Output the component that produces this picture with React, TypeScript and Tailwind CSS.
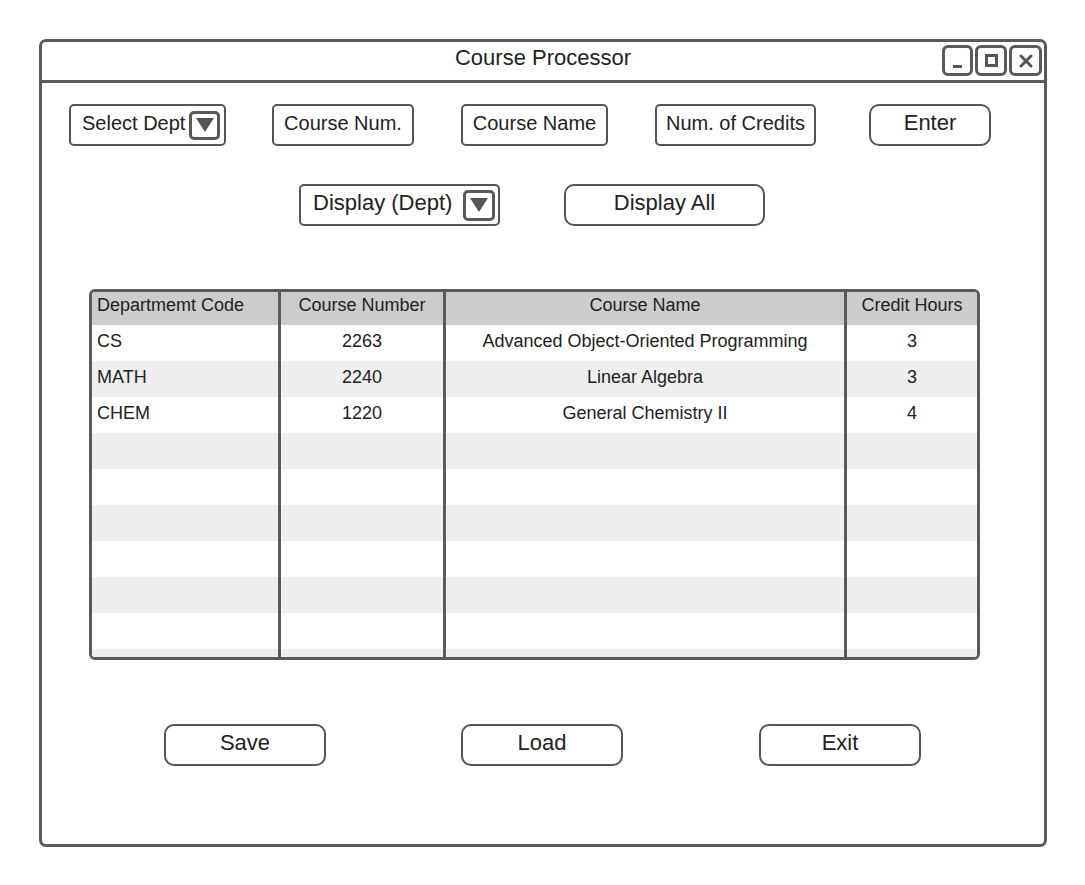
import React from "react";

const Arrow = ({ cls }: { cls: string }) => (
  <div className={`flex items-center justify-center rounded-[5px] border-[3px] border-[#595959] bg-white ${cls}`}>
    <svg width="20" height="16" viewBox="0 0 20 16">
      <polygon points="1,1 19,1 10,15" fill="#555555" />
    </svg>
  </div>
);

const Box = ({ label, cls }: { label: string; cls: string }) => (
  <div
    className={`flex h-[42px] items-center justify-center rounded-[5px] border-[2px] border-[#555555] bg-white pb-[5px] text-[20px] text-[#222] ${cls}`}
  >
    {label}
  </div>
);

const Btn = ({ label, cls }: { label: string; cls: string }) => (
  <div
    className={`flex h-[42px] items-center justify-center rounded-[10px] border-[2px] border-[#555555] bg-white pb-[6px] text-[22px] text-[#222] ${cls}`}
  >
    {label}
  </div>
);

const rows = [
  ["CS", "2263", "Advanced Object-Oriented Programming", "3"],
  ["MATH", "2240", "Linear Algebra", "3"],
  ["CHEM", "1220", "General Chemistry II", "4"],
  ["", "", "", ""],
  ["", "", "", ""],
  ["", "", "", ""],
  ["", "", "", ""],
  ["", "", "", ""],
  ["", "", "", ""],
  ["", "", "", ""],
];

export default function App() {
  return (
    <div
      className="h-[885px] w-[1085px] bg-white pl-[39px] pt-[39px]"
      style={{ fontFamily: '"Liberation Sans", Arial, sans-serif' }}
    >
      <div className="flex h-[808px] w-[1008px] flex-col rounded-[7px] border-[3px] border-[#5a5a5a]">
        {/* title bar */}
        <div className="relative flex h-[41px] items-center justify-center border-b-[3px] border-[#5a5a5a]">
          <span className="pb-[8px] text-[22px] text-[#222]">Course Processor</span>
          <div className="absolute right-[2px] top-[3px] flex gap-[2px]">
            <div className="flex h-[31px] w-[31px] items-end justify-start rounded-[6px] border-[3px] border-[#5a5a5a] pb-[5px] pl-[8px]">
              <div className="h-[3px] w-[9px] bg-[#555]" />
            </div>
            <div className="flex h-[31px] w-[32px] items-center justify-center rounded-[6px] border-[3px] border-[#5a5a5a]">
              <div className="h-[13px] w-[13px] border-[3px] border-[#555]" />
            </div>
            <div className="flex h-[31px] w-[33px] items-center justify-center rounded-[6px] border-[3px] border-[#5a5a5a]">
              <svg width="14" height="14" viewBox="0 0 14 14">
                <path d="M2 2 L12 12 M12 2 L2 12" stroke="#555" strokeWidth="3" strokeLinecap="round" />
              </svg>
            </div>
          </div>
        </div>

        {/* row 1 */}
        <div className="mt-[21px] flex items-start pl-[27px]">
          <div className="flex h-[42px] w-[157px] items-center justify-between rounded-[5px] border-[2px] border-[#555555] bg-white pl-[11px] pr-[4px] text-[20px] text-[#222]">
            <span className="pb-[5px]">Select Dept</span>
            <Arrow cls="h-[29px] w-[31px]" />
          </div>
          <Box label="Course Num." cls="ml-[46px] w-[142px]" />
          <Box label="Course Name" cls="ml-[47px] w-[147px]" />
          <Box label="Num. of Credits" cls="ml-[47px] w-[161px]" />
          <Btn label="Enter" cls="ml-[53px] w-[122px]" />
        </div>

        {/* row 2 */}
        <div className="mt-[38px] flex items-start pl-[257px]">
          <div className="flex h-[42px] w-[201px] items-center justify-between rounded-[5px] border-[2px] border-[#555555] bg-white pl-[12px] pr-[3px] text-[22px] text-[#222]">
            <span className="pb-[6px]">Display (Dept)</span>
            <Arrow cls="h-[31px] w-[32px]" />
          </div>
          <Btn label="Display All" cls="ml-[64px] w-[201px]" />
        </div>

        {/* table */}
        <div className="ml-[47px] mt-[63px] h-[371px] w-[891px] overflow-hidden rounded-[6px] border-[3px] border-[#5a5a5a] text-[18px] text-[#222]">
          <div className="flex h-[33px] bg-[#cccccc] leading-[20px]">
            <div className="w-[189px] border-r-[3px] border-[#5a5a5a] pl-[5px] pt-[3px]">Departmemt Code</div>
            <div className="w-[165px] border-r-[3px] border-[#5a5a5a] pt-[3px] text-center">Course Number</div>
            <div className="w-[401px] border-r-[3px] border-[#5a5a5a] pt-[3px] text-center">Course Name</div>
            <div className="w-[130px] pt-[3px] text-center">Credit Hours</div>
          </div>
          {rows.map((r, i) => (
            <div key={i} className={`flex h-[36px] leading-[20px] ${i % 2 === 1 ? "bg-[#efefef]" : "bg-white"}`}>
              <div className="w-[189px] border-r-[3px] border-[#5a5a5a] pl-[5px] pt-[6px]">{r[0]}</div>
              <div className="w-[165px] border-r-[3px] border-[#5a5a5a] pt-[6px] text-center">{r[1]}</div>
              <div className="w-[401px] border-r-[3px] border-[#5a5a5a] pt-[6px] text-center">{r[2]}</div>
              <div className="w-[130px] pt-[6px] text-center">{r[3]}</div>
            </div>
          ))}
        </div>

        {/* bottom buttons */}
        <div className="mt-[64px] flex items-start pl-[122px]">
          <Btn label="Save" cls="w-[162px]" />
          <Btn label="Load" cls="ml-[135px] w-[162px]" />
          <Btn label="Exit" cls="ml-[136px] w-[162px]" />
        </div>
      </div>
    </div>
  );
}
